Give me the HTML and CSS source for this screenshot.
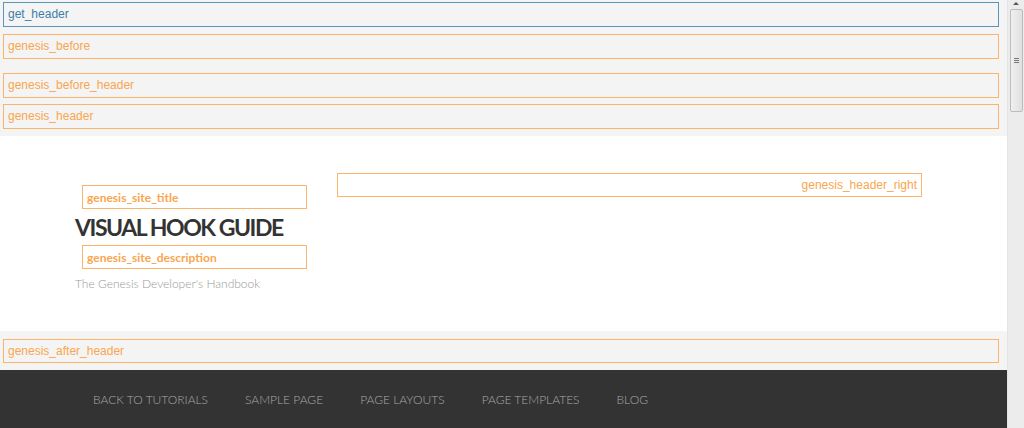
FILE: index.html
```html
<!DOCTYPE html>
<html>
<head>
<meta charset="utf-8">
<link rel="stylesheet" href="styles.css">
</head>
<body>
<div class="window">
  <div class="page">
    <div class="top">
      <div class="hook hook-blue hook-get">get_header</div>
      <div class="hook hook-before">genesis_before</div>
      <div class="hook hook-before-header">genesis_before_header</div>
      <div class="hook hook-header">genesis_header</div>
    </div>
    <header class="site-header">
      <div class="title-area">
        <div class="hook hook-small">genesis_site_title</div>
        <h1 class="site-title">VISUAL HOOK GUIDE</h1>
        <div class="hook hook-small">genesis_site_description</div>
        <p class="site-description">The Genesis Developer's Handbook</p>
      </div>
      <div class="header-right">
        <div class="hook hook-right">genesis_header_right</div>
      </div>
    </header>
    <div class="after">
      <div class="hook hook-after">genesis_after_header</div>
    </div>
    <nav class="nav">
      <a>BACK TO TUTORIALS</a>
      <a>SAMPLE PAGE</a>
      <a>PAGE LAYOUTS</a>
      <a>PAGE TEMPLATES</a>
      <a>BLOG</a>
    </nav>
  </div>
  <div class="scrollbar">
    <div class="arrow"></div>
    <div class="thumb"><div class="grip"></div></div>
  </div>
</div>
</body>
</html>
```
FILE: styles.css
```css
html, body {
  margin: 0;
  padding: 0;
  height: 100%;
  overflow: hidden;
}
body {
  font-family: "Liberation Sans", Arial, sans-serif;
  background: #f4f4f4;
}
.window {
  display: flex;
  height: 428px;
  width: 1024px;
}
.page {
  width: 1007px;
  display: flex;
  flex-direction: column;
}
.top {
  background: #f4f4f4;
  padding: 2px 8px 7px 3px;
}
.hook {
  box-sizing: border-box;
  height: 25px;
  border: 1px solid #fbb46a;
  color: #f9a64f;
  font-size: 12px;
  line-height: 23px;
  padding-left: 4px;
  background: #f4f4f4;
}
.hook-blue {
  border-color: #5a95bb;
  color: #3f7ea8;
}
.hook-before { margin-top: 7px; }
.hook-before-header { margin-top: 14px; }
.hook-header { margin-top: 6px; }
.site-header {
  background: #fff;
  height: 195px;
  display: flex;
  padding-left: 75px;
}
.title-area {
  width: 240px;
  padding-top: 49px;
}
.hook-small {
  width: 225px;
  height: 24px;
  margin-left: 7px;
  background: #fff;
  font-family: Lato, sans-serif;
  font-weight: 700;
  font-size: 12px;
  line-height: 23px;
  padding-left: 4px;
}
.site-title {
  margin: 0;
  font-family: Lato, sans-serif;
  font-weight: 700;
  font-size: 23px;
  line-height: 36px;
  color: #333;
  letter-spacing: -1.45px;
  white-space: nowrap;
}
.site-description {
  margin: 7px 0 0;
  font-family: Lato, sans-serif;
  font-weight: 300;
  font-size: 12px;
  color: #999;
}
.header-right {
  margin-left: 22px;
  padding-top: 37px;
}
.hook-right {
  width: 585px;
  height: 24px;
  background: #fff;
  text-align: right;
  padding-right: 4px;
  line-height: 23px;
}
.after {
  background: #f4f4f4;
  padding: 8px 8px 7px 3px;
}
.hook-after {
  height: 24px;
}
.nav {
  flex: 1;
  background: #333;
  display: flex;
  padding: 22px 0 0 93px;
  gap: 37px;
}
.nav a {
  font-family: Lato, sans-serif;
  font-weight: 300;
  font-size: 12px;
  color: #a8a8a8;
  line-height: 16px;
}
.scrollbar {
  width: 17px;
  background: #ececec;
  border-left: 1px solid #e4e4e4;
  box-sizing: border-box;
  display: flex;
  flex-direction: column;
  align-items: center;
}
.arrow {
  margin-top: 2px;
  width: 0;
  height: 0;
  border-left: 3px solid transparent;
  border-right: 3px solid transparent;
  border-bottom: 3px solid #555;
}
.thumb {
  margin-top: 4px;
  width: 13px;
  height: 103px;
  box-sizing: border-box;
  border: 1px solid #bcbcbc;
  border-radius: 2px;
  background: linear-gradient(to right, #f0f0f0, #e0e0e0);
  display: flex;
  align-items: center;
  justify-content: center;
}
.grip {
  width: 5px;
  height: 5px;
  background: repeating-linear-gradient(to bottom, #777 0 1px, transparent 1px 2px);
}
```
